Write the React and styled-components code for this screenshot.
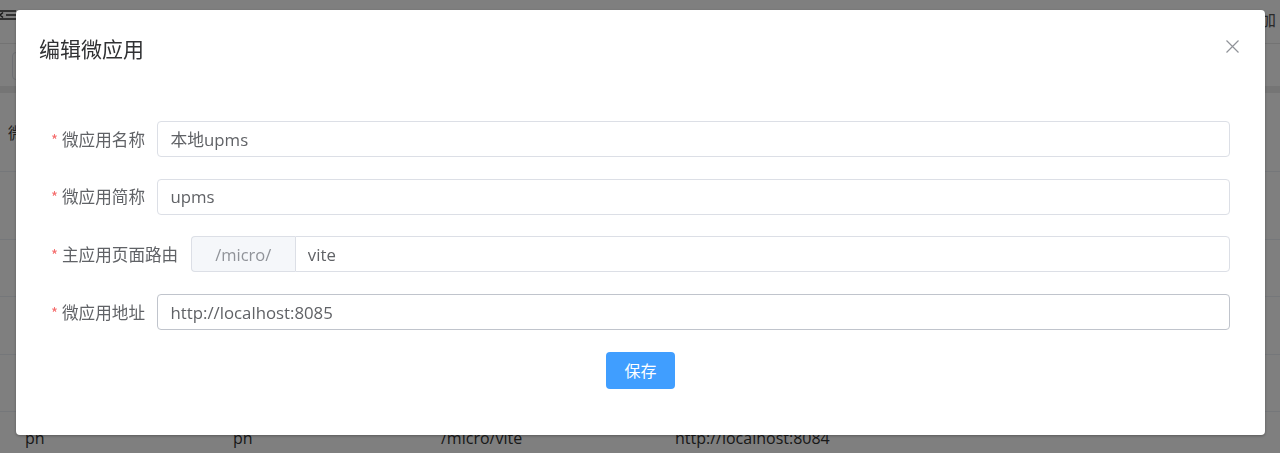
import React from "react";
import styled, { createGlobalStyle } from "styled-components";

const GlobalStyle = createGlobalStyle`
  html, body {
    margin: 0;
    padding: 0;
    background: #fff;
    font-family: "Open Sans", "Noto Sans CJK SC", sans-serif;
  }
  * { box-sizing: border-box; }
`;

const rows = [
  { name: "本地upms", short: "upms", route: "/micro/upms", url: "http://localhost:8085", h: 68 },
  { name: "本地vite", short: "vite", route: "/micro/vite", url: "http://localhost:8086", h: 57 },
  { name: "本地app", short: "app", route: "/micro/app", url: "http://localhost:8087", h: 58 },
  { name: "upms", short: "upms", route: "/micro/upms", url: "http://localhost:8083", h: 57 },
  { name: "pn", short: "pn", route: "/micro/vite", url: "http://localhost:8084", h: 52 },
];

const fields = [
  { label: "微应用名称", value: "本地upms" },
  { label: "微应用简称", value: "upms" },
  { label: "主应用页面路由", value: "vite", prepend: "/micro/" },
  { label: "微应用地址", value: "http://localhost:8085", active: true },
];

const App = () => {
  return (
    <>
      <GlobalStyle />
      <Page>
        <TopBar>
          <FoldIcon viewBox="0 0 16 10">
            <path d="M0 1h16M6 5h10M0 9h16M0 5l3-2.5M0 5l3 2.5" stroke="#333" strokeWidth="1.6" fill="none" />
          </FoldIcon>
          <TopAction>添加</TopAction>
        </TopBar>
        <Toolbar>
          <SearchBox />
        </Toolbar>
        <Band />
        <Table>
          <HeadRow>
            <Cell>微应用名称</Cell>
            <Cell>微应用简称</Cell>
            <Cell>主应用页面路由</Cell>
            <Cell>微应用地址</Cell>
          </HeadRow>
          {rows.map((r, i) => (
            <BodyRow key={i} $h={r.h}>
              <Cell>{r.name}</Cell>
              <Cell>{r.short}</Cell>
              <Cell>{r.route}</Cell>
              <Cell>{r.url}</Cell>
            </BodyRow>
          ))}
        </Table>
      </Page>

      <Overlay>
        <Dialog>
          <Header>
            <Title>编辑微应用</Title>
            <Close aria-label="close">
              <svg width="13" height="13" viewBox="0 0 13 13">
                <path d="M0.5 0.5l12 12M12.5 0.5l-12 12" stroke="#909399" strokeWidth="1.2" />
              </svg>
            </Close>
          </Header>
          <Body>
            {fields.map((f, i) => (
              <FormItem key={i}>
                <Label>{f.label}</Label>
                <InputGroup>
                  {f.prepend && <Prepend>{f.prepend}</Prepend>}
                  <Input $joined={!!f.prepend} $active={f.active} defaultValue={f.value} />
                </InputGroup>
              </FormItem>
            ))}
            <Footer>
              <SaveButton>保存</SaveButton>
            </Footer>
          </Body>
        </Dialog>
      </Overlay>
    </>
  );
};

export default App;

const Page = styled.div`
  width: 1280px;
  height: 453px;
  overflow: hidden;
  color: #333;
`;

const TopBar = styled.div`
  height: 44px;
  display: flex;
  align-items: center;
  justify-content: space-between;
  border-bottom: 1px solid #e6e6e6;
  font-family: "Noto Sans CJK SC", sans-serif;
  font-size: 16px;
`;

const FoldIcon = styled.svg`
  width: 16px;
  height: 10px;
  margin-top: -14px;
`;

const TopAction = styled.span`
  margin-top: -6px;
  padding-right: 4px;
  color: #555;
`;

const Toolbar = styled.div`
  height: 42px;
  padding: 8px 12px;
`;

const SearchBox = styled.div`
  width: 220px;
  height: 28px;
  border: 1px solid #dcdfe6;
  border-radius: 4px;
`;

const Band = styled.div`
  height: 7px;
  background: #eaeaea;
`;

const Table = styled.div`
  display: flex;
  flex-direction: column;
`;

const HeadRow = styled.div`
  height: 79px;
  display: grid;
  grid-template-columns: 208px 208px 234px 1fr;
  align-items: center;
  padding-left: 8px;
  border-bottom: 1px solid #ebeef5;
  font-size: 16px;
  color: #444;
`;

const BodyRow = styled(HeadRow)`
  height: ${(p) => p.$h}px;
  flex-shrink: 0;
  padding-left: 25px;
  color: #333;
`;

const Cell = styled.div`
  white-space: nowrap;
`;

const Overlay = styled.div`
  position: fixed;
  inset: 0;
  background: rgba(0, 0, 0, 0.5);
`;

const Dialog = styled.div`
  width: 1249px;
  margin: 10px 0 0 16px;
  background: #fff;
  border-radius: 4px;
  box-shadow: 0 1px 3px rgba(0, 0, 0, 0.3);
`;

const Header = styled.div`
  display: flex;
  align-items: center;
  justify-content: space-between;
  padding: 24px 26px 0 23px;
`;

const Title = styled.h2`
  margin: 0;
  font-family: "Noto Sans CJK SC", sans-serif;
  font-weight: 400;
  font-size: 21px;
  line-height: 28px;
  color: #303133;
`;

const Close = styled.button`
  display: flex;
  padding: 0;
  border: 0;
  background: none;
  margin-top: -4px;
  cursor: pointer;
`;

const Body = styled.div`
  padding: 59px 35px 46px;
  display: flex;
  flex-direction: column;
  gap: 21.7px;
`;

const FormItem = styled.div`
  display: flex;
  align-items: center;
  height: 36px;
`;

const Label = styled.label`
  padding-right: 12.5px;
  font-family: "Noto Sans CJK SC", sans-serif;
  font-size: 16.6px;
  line-height: 36px;
  color: #606266;
  white-space: nowrap;

  &::before {
    content: "*";
    color: #f56c6c;
    margin-right: 4px;
    font-size: 15px;
  }
`;

const InputGroup = styled.div`
  flex: 1;
  display: flex;
  height: 36px;
`;

const Prepend = styled.div`
  display: flex;
  align-items: center;
  padding: 0 23.5px;
  background: #f5f7fa;
  border: 1px solid #dcdfe6;
  border-right: 0;
  border-radius: 4px 0 0 4px;
  color: #909399;
  font-size: 16.5px;
`;

const Input = styled.input`
  flex: 1;
  height: 36px;
  padding: 0 12px;
  border: 1px solid ${(p) => (p.$active ? "#c0c4cc" : "#dcdfe6")};
  border-radius: ${(p) => (p.$joined ? "0 4px 4px 0" : "4px")};
  font-family: "Open Sans", "Noto Sans CJK SC", sans-serif;
  font-size: 16.8px;
  color: #606266;
  outline: none;
  background: #fff;
`;

const Footer = styled.div`
  display: flex;
  justify-content: center;
`;

const SaveButton = styled.button`
  width: 69px;
  height: 37px;
  border: 0;
  border-radius: 4px;
  background: #409eff;
  color: #fff;
  font-family: "Noto Sans CJK SC", sans-serif;
  font-size: 16px;
  cursor: pointer;
`;
